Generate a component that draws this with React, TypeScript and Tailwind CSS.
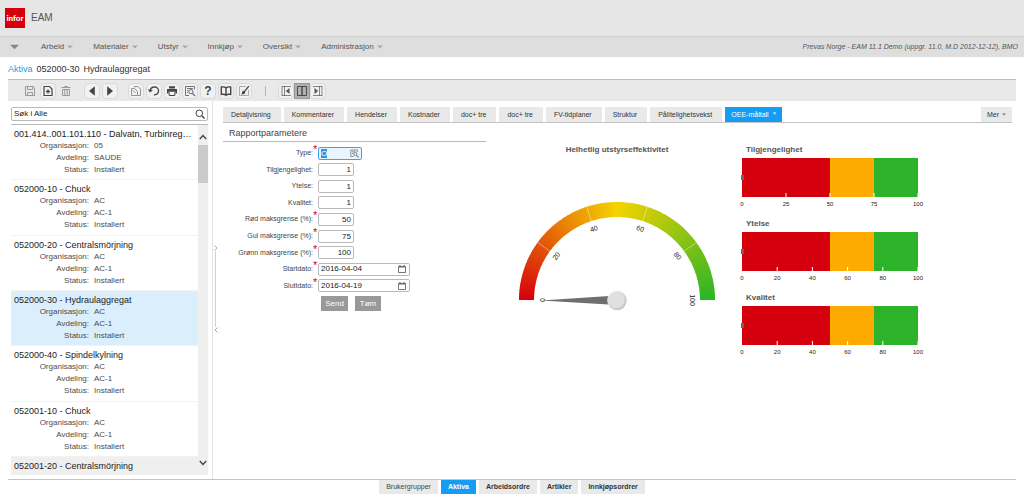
import React, { type ReactNode } from "react";

const menus = ["Arbeid", "Materialer", "Utstyr", "Innkjøp", "Oversikt", "Administrasjon"];

const assets = [
  { title: "001.414..001.101.110 - Dalvatn, Turbinreg…", org: "05", dept: "SAUDE" },
  { title: "052000-10 - Chuck", org: "AC", dept: "AC-1" },
  { title: "052000-20 - Centralsmörjning", org: "AC", dept: "AC-1" },
  { title: "052000-30 - Hydraulaggregat", org: "AC", dept: "AC-1", selected: true },
  { title: "052000-40 - Spindelkylning", org: "AC", dept: "AC-1" },
  { title: "052001-10 - Chuck", org: "AC", dept: "AC-1" },
];

const tabs = [
  "Detaljvisning",
  "Kommentarer",
  "Hendelser",
  "Kostnader",
  "doc+ tre",
  "doc+ tre",
  "FV-tidplaner",
  "Struktur",
  "Pålitelighetsvekst",
];

const numberFields = [
  { id: "availability", label: "Tilgjengelighet:", value: "1", required: false },
  { id: "performance", label: "Ytelse:", value: "1", required: false },
  { id: "quality", label: "Kvalitet:", value: "1", required: false },
  { id: "red", label: "Rød maksgrense (%):", value: "50", required: true },
  { id: "yellow", label: "Gul maksgrense (%):", value: "75", required: true },
  { id: "green", label: "Grønn maksgrense (%):", value: "100", required: true },
];

const dateFields = [
  { id: "start", label: "Startdato:", value: "2016-04-04" },
  { id: "end", label: "Sluttdato:", value: "2016-04-19" },
];

function Caret({ className = "" }: { className?: string }) {
  return (
    <svg viewBox="0 0 6 4" className={`shrink-0 ${className}`} aria-hidden="true">
      <path d="M0 0.5h6L3 3.5z" fill="currentColor" />
    </svg>
  );
}

function Icon({ children, className = "" }: { children: ReactNode; className?: string }) {
  return (
    <svg
      viewBox="0 0 12 12"
      className={`size-3 ${className}`}
      fill="none"
      stroke="currentColor"
      strokeWidth="1.2"
      aria-hidden="true"
    >
      {children}
    </svg>
  );
}

function ToolButton({ label, children, muted }: { label: string; children: ReactNode; muted?: boolean }) {
  return (
    <button
      type="button"
      aria-label={label}
      className={`flex size-4 items-center justify-center rounded-sm border ${
        muted ? "border-transparent text-[#9a9a9a]" : "border-[#dadada] bg-[#f1f1f1] text-[#444]"
      }`}
    >
      {children}
    </button>
  );
}

function Toolbar() {
  return (
    <div className="mx-2 flex h-[22px] items-center border-t border-[#bdbdbd] bg-[#e9e9e9] pl-[14px]">
      <div className="flex gap-0.5">
        <ToolButton label="Lagre" muted>
          <Icon>
            <path d="M1.5 1.5h8l1 1v8h-9zM3.5 1.5v3h5v-3M3.5 10.5v-3h5v3" strokeWidth="1" />
          </Icon>
        </ToolButton>
        <ToolButton label="Ny">
          <Icon>
            <path d="M2 1.5h5.500l2.500 2.500v6.500h-8z" />
            <path d="M6 4.500v4M4 6.500h4" strokeWidth="1.300" />
          </Icon>
        </ToolButton>
        <ToolButton label="Slett" muted>
          <Icon>
            <path d="M1.500 2.500h9M4.500 2.500v-1h3v1M2.500 4.500h7v6h-7zM4.800 5v5M7.200 5v5" strokeWidth="1" />
          </Icon>
        </ToolButton>
      </div>
      <div className="ml-2.5 flex gap-0.5">
        <ToolButton label="Forrige">
          <Icon>
            <path d="M8.800 1.200v9.600L3 6z" fill="currentColor" stroke="none" />
          </Icon>
        </ToolButton>
        <ToolButton label="Neste">
          <Icon>
            <path d="M3.200 1.200v9.600L9 6z" fill="currentColor" stroke="none" />
          </Icon>
        </ToolButton>
      </div>
      <div className="ml-2.5 flex gap-0.5">
        <ToolButton label="Kopier">
          <Icon className="text-[#888]">
            <path d="M4.500 2.500v-1h3.500l2.500 2.500v6.500h-3M1.500 3.500h3l3 3v4h-6zM3 5.500l2.500 2.500" strokeWidth=".9" />
          </Icon>
        </ToolButton>
        <ToolButton label="Angre">
          <Icon>
            <path d="M2 5.600C2.600 3.300 4.300 2 6.400 2a3.900 3.900 0 0 1 .5 7.800H5.800" strokeWidth="1.300" />
            <path d="M.6 4.400l1.500 2.200 2.200-1.500" />
          </Icon>
        </ToolButton>
        <ToolButton label="Skriv ut">
          <Icon>
            <path d="M3 1.200h6v2.200H3zM1 4h10v4.600H9.400V6.700H2.600v1.900H1z" fill="currentColor" stroke="none" />
            <path d="M3.200 7.300v3.200h5.600V7.300" strokeWidth="1" />
          </Icon>
        </ToolButton>
        <ToolButton label="Forhåndsvis">
          <Icon className="text-[#666]">
            <path d="M5 10.500H1.500v-9h9v3M3 3.500h6M3 5.500h1M3 7.500h1" strokeWidth=".9" />
            <circle cx="6.900" cy="6.700" r="2.100" strokeWidth="1" />
            <path d="M8.500 8.400l2.500 2.600" strokeWidth="1.300" />
          </Icon>
        </ToolButton>
        <ToolButton label="Hjelp">
          <span className="text-[12px] leading-3 font-bold">?</span>
        </ToolButton>
        <ToolButton label="Dokumentasjon">
          <Icon>
            <path
              d="M6 3C5 1.800 3 1.700 1.300 2v7.400C3.200 9.100 5 9.300 6 10.200 7 9.300 8.800 9.100 10.700 9.400V2C9 1.700 7 1.800 6 3zM6 3v7"
              strokeWidth="1.400"
            />
          </Icon>
        </ToolButton>
        <ToolButton label="Rediger">
          <Icon>
            <path d="M8 1.500H1.500v9h9V5" strokeWidth=".8" stroke="#999" />
            <path d="M10.800 1.200L6 7.200" strokeWidth="1.300" />
            <path d="M5 5.600l2.300 1.900c-.5 1.500-2 2-4 1.900C4.400 8.500 4 7 5 5.600z" fill="currentColor" stroke="none" />
          </Icon>
        </ToolButton>
      </div>
      <span className="ml-[13px] h-2.5 w-px bg-[#b5b5b5]" />
      <div className="ml-3 flex">
        <ToolButton label="Bare liste">
          <Icon className="text-[#555]">
            <path d="M2 1v10M4.500 1v10M2 1.500h9M2 10.500h9" strokeWidth=".7" />
            <path d="M9.500 3v6L5.800 6z" fill="currentColor" stroke="none" />
          </Icon>
        </ToolButton>
        <button
          type="button"
          aria-label="Delt visning"
          aria-pressed="true"
          className="flex size-4 items-center justify-center border border-[#999] bg-[#b0b0b0] text-[#4a4a4a]"
        >
          <Icon>
            <path d="M1.500 1.500h9v9h-9z" strokeWidth="1" />
            <path d="M6 1.500v9" strokeWidth="1.400" />
          </Icon>
        </button>
        <ToolButton label="Bare detaljer">
          <Icon className="text-[#555]">
            <path d="M7.500 1v10M10 1v10M1 1.500h9M1 10.500h9" strokeWidth=".7" />
            <path d="M2.500 3v6l3.700-3z" fill="currentColor" stroke="none" />
          </Icon>
        </ToolButton>
      </div>
    </div>
  );
}

function AssetList() {
  return (
    <section className="flex w-[205px] shrink-0 flex-col border-r border-[#e4e4e4] pt-1.5 pr-1 pb-1 pl-[3px]">
      <div className="flex h-[14px] items-center rounded-xs border border-[#b9b9b9] px-0.5">
        <input
          aria-label="Søk i alle"
          defaultValue="Søk i Alle"
          className="min-w-0 flex-1 bg-transparent text-[8px] leading-3 text-[#222] outline-none"
        />
        <svg viewBox="0 0 10 10" className="size-2.5 text-[#444]" fill="none" stroke="currentColor" aria-hidden="true">
          <circle cx="4.300" cy="4.300" r="3.300" strokeWidth="1" />
          <path d="M6.800 6.800l2.700 2.700" strokeWidth="1.300" />
        </svg>
      </div>
      <div className="mt-[3px] flex flex-1 border-t border-[#b9b9b9]">
        <ul className="flex min-w-0 flex-1 flex-col">
          {assets.map((a) => (
            <li
              key={a.title}
              className={`flex-1 border-b border-[#f3f3f3] pt-[3px] pl-[3px] ${a.selected ? "bg-[#daeefc]" : ""}`}
            >
              <h3 className="text-[9px] leading-3 whitespace-nowrap text-[#222]">{a.title}</h3>
              <dl className="grid grid-cols-[75px_1fr] gap-x-[5px] text-[8px] leading-3 text-[#4c4c4c]">
                <dt className="text-right">Organisasjon:</dt>
                <dd>{a.org}</dd>
                <dt className="text-right">Avdeling:</dt>
                <dd>{a.dept}</dd>
                <dt className="text-right">Status:</dt>
                <dd>Installert</dd>
              </dl>
            </li>
          ))}
          <li className="h-[18px] bg-[#efefef] pt-[3px] pl-[3px]">
            <h3 className="text-[9px] leading-3 whitespace-nowrap text-[#222]">052001-20 - Centralsmörjning</h3>
          </li>
        </ul>
        <div className="flex w-2.5 flex-col items-center bg-[#efefef] py-2">
          <svg viewBox="0 0 8 8" className="size-2" fill="none" stroke="#444" strokeWidth="1.400" aria-hidden="true">
            <path d="M.8 6L4 2.600 7.200 6" />
          </svg>
          <div className="mt-1 h-[38px] w-full bg-[#cbcbcb]" />
          <svg viewBox="0 0 8 8" className="mt-auto size-2" fill="none" stroke="#444" strokeWidth="1.400" aria-hidden="true">
            <path d="M.8 2L4 5.400 7.200 2" />
          </svg>
        </div>
      </div>
    </section>
  );
}

function Splitter() {
  return (
    <div className="flex w-[5px] shrink-0 flex-col items-center pt-[144px] text-[#aaa]">
      <svg viewBox="0 0 4 6" className="h-1.5 w-1" fill="none" stroke="currentColor" aria-hidden="true">
        <path d="M.5.5L3 3 .5 5.500" />
      </svg>
      <div className="h-[76px] w-px bg-[#d0d0d0]" />
      <svg viewBox="0 0 4 6" className="h-1.5 w-1" fill="none" stroke="currentColor" aria-hidden="true">
        <path d="M3.500.5L1 3l2.500 2.500" />
      </svg>
    </div>
  );
}

function FieldLabel({ id, label, required }: { id: string; label: string; required?: boolean }) {
  return (
    <div className="flex w-[95px] shrink-0 justify-end text-[7px] leading-3 text-[#444]">
      <label htmlFor={id} className="whitespace-nowrap">
        {label}
      </label>
      <span className="w-[5px] text-[11px] leading-1 text-[#d5000e]">{required ? "*" : ""}</span>
    </div>
  );
}

function CalendarIcon() {
  return (
    <svg viewBox="0 0 10 10" className="size-2.5 text-[#666]" fill="none" stroke="currentColor" aria-hidden="true">
      <path d="M1.500 2.500h7v6h-7z" strokeWidth=".9" />
      <path d="M1.500 3h7M3 1v2M7 1v2" strokeWidth="1.200" />
    </svg>
  );
}

function ParameterForm() {
  return (
    <form className="w-[263px] shrink-0">
      <h2 className="border-b border-[#b9b9b9] pt-1 pb-0.5 pl-1.5 text-[9px] leading-3 text-[#444]">Rapportparametere</h2>
      <div className="mt-[3px] grid h-[149px] auto-rows-fr">
        <div className="flex items-center">
          <FieldLabel id="type" label="Type:" required />
          <div className="flex h-[13px] w-11 items-center rounded-xs border border-[#3aa5ea] bg-[#e8f5fe] px-0.5">
            <span className="relative flex min-w-0 flex-1 items-center">
              <span className="h-[9px] w-1.5 bg-[#2a97e8]" />
              <input
                id="type"
                defaultValue="O"
                className="absolute inset-0 w-full bg-transparent text-[8px] leading-[9px] text-white outline-none"
              />
            </span>
            <svg viewBox="0 0 9 9" className="size-[9px] text-[#777]" fill="none" stroke="currentColor" aria-hidden="true">
              <path d="M3.500 7.500h-2.700V1h6.500v2M2 2.800h3.500M2 4.500h1" strokeWidth=".8" />
              <circle cx="5.300" cy="5" r="1.600" strokeWidth=".9" />
              <path d="M6.500 6.300l2 2.200" strokeWidth="1.100" />
            </svg>
          </div>
        </div>
        {numberFields.map((f) => (
          <div key={f.id} className="flex items-center">
            <FieldLabel id={f.id} label={f.label} required={f.required} />
            <input
              id={f.id}
              defaultValue={f.value}
              className="h-[13px] w-9 rounded-xs border border-[#b9b9b9] pr-0.5 text-right text-[8px] leading-3 text-[#222]"
            />
          </div>
        ))}
        {dateFields.map((f) => (
          <div key={f.id} className="flex items-center">
            <FieldLabel id={f.id} label={f.label} required />
            <div className="flex h-[13px] w-[92px] items-center rounded-xs border border-[#b9b9b9] px-0.5">
              <input
                id={f.id}
                defaultValue={f.value}
                className="min-w-0 flex-1 bg-transparent text-[8px] leading-3 text-[#222] outline-none"
              />
              <CalendarIcon />
            </div>
          </div>
        ))}
      </div>
      <div className="mt-0.5 flex gap-[7px] pl-[98px]">
        <button type="button" className="h-[15px] w-[27px] bg-[#999] text-[8px] leading-3 text-white">
          Send
        </button>
        <button type="button" className="h-[15px] w-[26px] bg-[#999] text-[8px] leading-3 text-white">
          Tøm
        </button>
      </div>
    </form>
  );
}

const stops: [number, number[]][] = [
  [0, [214, 0, 14]],
  [0.5, [245, 212, 0]],
  [1, [44, 180, 40]],
];

function colorAt(t: number) {
  const [a, b] = t < 0.5 ? [stops[0], stops[1]] : [stops[1], stops[2]];
  const k = (t - a[0]) / (b[0] - a[0]);
  const c = a[1].map((v, i) => Math.round(v + (b[1][i] - v) * k));
  return `rgb(${c.join(",")})`;
}

function polar(t: number, r: number) {
  const angle = Math.PI * (1 - t);
  return [100 + r * Math.cos(angle), 100 - r * Math.sin(angle)];
}

function slice(from: number, to: number) {
  const [x1, y1] = polar(from, 98);
  const [x2, y2] = polar(to, 98);
  const [x3, y3] = polar(to, 83);
  const [x4, y4] = polar(from, 83);
  return `M${x1} ${y1}A98 98 0 0 1 ${x2} ${y2}L${x3} ${y3}A83 83 0 0 0 ${x4} ${y4}Z`;
}

function Gauge() {
  const n = 100;
  return (
    <svg viewBox="0 0 200 114" className="mt-[43px] w-[200px]" role="img" aria-label="Helhetlig utstyrseffektivitet: 0">
      <defs>
        <linearGradient id="hub" x1="0" y1="0" x2="1" y2="1">
          <stop offset="0" stopColor="#f4f4f4" />
          <stop offset="1" stopColor="#bdbdbd" />
        </linearGradient>
      </defs>
      {Array.from({ length: n }, (_, i) => (
        <path key={i} d={slice(i / n, Math.min(1, (i + 1.3) / n))} fill={colorAt((i + 0.5) / n)} />
      ))}
      {[0.2, 0.4, 0.6, 0.8].map((t) => {
        const [x1, y1] = polar(t, 83);
        const [x2, y2] = polar(t, 98);
        return <line key={t} x1={x1} y1={y1} x2={x2} y2={y2} stroke="#fff" strokeOpacity=".4" />;
      })}
      {[0, 20, 40, 60, 80, 100].map((v) => {
        const [x, y] = polar(v / 100, 75);
        return (
          <text
            key={v}
            x={x}
            y={y}
            fontSize="7"
            fill="#222"
            textAnchor="middle"
            dominantBaseline="central"
            transform={`rotate(${v * 1.8 - 90} ${x} ${y})`}
          >
            {v}
          </text>
        );
      })}
      <path d="M24 100.500L100 95.500v9.500z" fill="#6e6e6e" />
      <circle cx="100" cy="100.500" r="9.800" fill="url(#hub)" />
      <circle cx="99.500" cy="100" r="8" fill="#e0e0e0" />
    </svg>
  );
}

function BulletChart({ title, ticks }: { title: string; ticks: number[] }) {
  return (
    <figure>
      <figcaption className="pl-1 text-[8px] leading-[14px] font-bold text-[#555]">{title}</figcaption>
      <div className="mt-px flex h-[39px]">
        <svg viewBox="0 0 180 60" className="-ml-0.5 h-[60px] w-[180px] shrink-0 overflow-visible" aria-hidden="true">
          <rect x="2" y="0" width="88" height="39" fill="#d5000e" />
          <rect x="90" y="0" width="44" height="39" fill="#ffaa00" />
          <rect x="134" y="0" width="44" height="39" fill="#2db329" />
          <rect x="1" y="17" width="3" height="5" fill="#666" />
          {ticks.map((v) => (
            <g key={v}>
              {v > 0 && <rect x={1.5 + v * 1.76} y="35" width="1" height="4" fill="#fff" />}
              <text x={2 + v * 1.76} y="48" fontSize="6" fill="#222" textAnchor="middle">
                {v}
              </text>
            </g>
          ))}
        </svg>
      </div>
    </figure>
  );
}

export default function App() {
  return (
    <div className="flex min-h-screen flex-col bg-white font-['Liberation_Sans',Arial,sans-serif] text-[#444]">
      <header className="flex h-9 items-center bg-[#e6e6e6] pl-[5px]">
        <span className="flex size-5 items-center justify-center bg-[#d5000e] font-['Lato','Liberation_Sans',sans-serif] text-[8px] leading-none font-black text-white">
          infor
        </span>
        <h1 className="ml-1.5 text-[10px] leading-3 text-[#555]">EAM</h1>
      </header>
      <nav className="flex h-[21px] items-center border-t border-[#cfcfcf] bg-[#dedede] pr-1.5 pl-2.5 text-[8px] leading-3 text-[#555]">
        <button type="button" aria-label="Meny" className="mr-[22px] flex">
          <Caret className="h-1.5 w-[9px] text-[#888]" />
        </button>
        <div className="flex gap-5">
          {menus.map((m) => (
            <button key={m} type="button" className="flex items-center gap-[3px] whitespace-nowrap">
              {m}
              <Caret className="h-1 w-1.5 text-[#aaa]" />
            </button>
          ))}
        </div>
        <span className="ml-auto text-[7px] italic">Prevas Norge - EAM 11.1 Demo (uppgr. 11.0, M.D 2012-12-12), BMO</span>
      </nav>
      <div className="flex h-[22px] items-center gap-1 pt-px pl-2 text-[9px] leading-3 text-[#333]">
        <a href="#aktiva" className="text-[#2b9bd8]">
          Aktiva
        </a>
        <span>052000-30</span>
        <span>Hydraulaggregat</span>
      </div>
      <Toolbar />
      <main className="mx-2 flex flex-1 border-b border-[#c4c4c4]">
        <AssetList />
        <Splitter />
        <section className="flex min-w-0 flex-1 flex-col pt-1.5 pr-1 pl-[5px]">
          <div className="flex h-4 items-stretch gap-[3px] border-b border-[#c4c4c4] text-[7px] leading-3">
            {tabs.map((t, i) => (
              <button key={i} type="button" className="bg-[#e9e9e9] pr-2.5 pl-2 whitespace-nowrap text-[#333]">
                {t}
              </button>
            ))}
            <button type="button" className="flex items-center gap-1 bg-[#159cf5] px-1.5 whitespace-nowrap text-white">
              OEE-måltall <span className="pb-1 text-[6px] leading-[6px]">×</span>
            </button>
            <button type="button" className="ml-auto flex items-center gap-[3px] bg-[#e9e9e9] px-1.5 whitespace-nowrap text-[#333]">
              Mer <Caret className="h-[3px] w-1 text-[#777]" />
            </button>
          </div>
          <div className="flex flex-1">
            <ParameterForm />
            <div className="ml-[31px] flex w-[200px] flex-col items-center pt-5">
              <h2 className="text-[8px] leading-[14px] font-bold text-[#555]">Helhetlig utstyrseffektivitet</h2>
              <Gauge />
            </div>
            <div className="ml-[25px] flex flex-col gap-5 pt-5">
              <BulletChart title="Tilgjengelighet" ticks={[0, 25, 50, 75, 100]} />
              <BulletChart title="Ytelse" ticks={[0, 20, 40, 60, 80, 100]} />
              <BulletChart title="Kvalitet" ticks={[0, 20, 40, 60, 80, 100]} />
            </div>
          </div>
        </section>
      </main>
      <footer className="flex h-[17px] items-start justify-center gap-[3px] text-[7px] leading-3">
        <button type="button" className="h-[14px] bg-[#e9e9e9] px-[7px] text-[#444]">
          Brukergrupper
        </button>
        <button type="button" className="h-[14px] bg-[#159cf5] px-[7px] font-bold text-white">
          Aktiva
        </button>
        {["Arbeidsordre", "Artikler", "Innkjøpsordrer"].map((t) => (
          <button key={t} type="button" className="h-[14px] bg-[#e9e9e9] px-[7px] font-bold text-[#333]">
            {t}
          </button>
        ))}
      </footer>
    </div>
  );
}
